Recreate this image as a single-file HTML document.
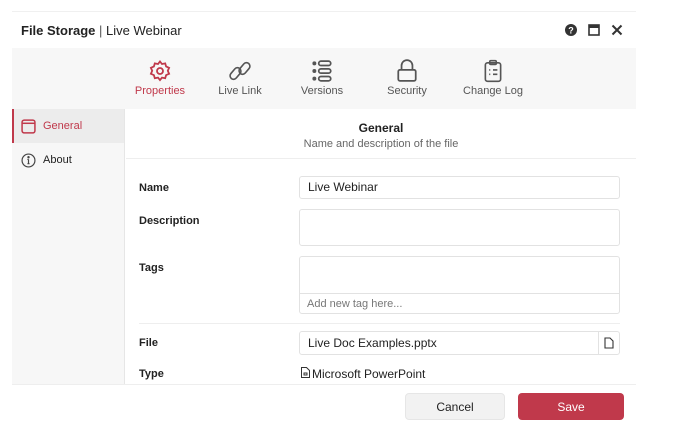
<!DOCTYPE html>
<html><head><meta charset="utf-8"><style>
*{box-sizing:border-box;margin:0;padding:0}
body{width:679px;height:442px;background:#fff;font-family:"Liberation Sans",sans-serif;color:#222;position:relative;overflow:hidden}
.dlg{position:absolute;left:12px;top:11px;width:624px;height:420px;background:#fff;border-top:1px solid #f0f0f0}
.hdr{position:absolute;left:0;top:0;width:624px;height:36px}
.title{position:absolute;left:9px;top:11px;font-size:13px}
.tabs{position:absolute;left:0;top:36px;width:624px;height:61px;background:#f7f7f7}
.tab{position:absolute;top:0;text-align:center;font-size:11px;color:#555}
.tab svg{display:block;margin:11px auto 2px}
.side{position:absolute;left:0;top:97px;width:113px;height:275px;background:#f7f7f7;border-right:1px solid #e6e6e6}
.si{height:34px;display:flex;align-items:center;font-size:11px;padding-left:9px;gap:7px}
.si.act{background:#ececec;border-left:2px solid #c0394b;color:#c0394b;padding-left:7px}
.content{position:absolute;left:114px;top:97px;width:510px;height:275px}
.lbl{position:absolute;left:13px;font-size:11px;font-weight:bold;color:#222}
.inp{position:absolute;left:173px;width:321px;border:1px solid #e2e2e2;border-radius:3px;background:#fff;font-size:12px;padding-left:8px}
.foot{position:absolute;left:0;top:372px;width:624px;height:48px;background:#fff;border-top:1px solid #eee}
.btn{position:absolute;top:8px;height:27px;border-radius:4px;font-size:12px;display:flex;align-items:center;justify-content:center}
</style></head><body>
<div class="dlg">
 <div class="hdr">
  <div class="title"><b>File Storage</b> <span style="color:#555">|</span> Live Webinar</div>
  <svg style="position:absolute;left:553px;top:12px" width="12" height="12" viewBox="0 0 12 12"><circle cx="6" cy="6" r="6" fill="#333"/><text x="6" y="9.5" font-size="9" font-weight="bold" text-anchor="middle" fill="#fff" font-family="Liberation Sans">?</text></svg>
  <svg style="position:absolute;left:576px;top:12px" width="12" height="12" viewBox="0 0 12 12"><rect x="1" y="1" width="10" height="10" fill="none" stroke="#333" stroke-width="1.6"/><rect x="1" y="1" width="10" height="3" fill="#333"/></svg>
  <svg style="position:absolute;left:599px;top:12px" width="12" height="12" viewBox="0 0 12 12"><path d="M1.5 1.5L10.5 10.5M10.5 1.5L1.5 10.5" stroke="#333" stroke-width="2"/></svg>
 </div>
 <div class="tabs">
  <div class="tab" style="left:118px;width:60px;color:#c0394b">
   <svg width="24" height="24" viewBox="0 0 24 24" fill="none" stroke="#c0394b" stroke-width="1.8"><circle cx="12" cy="12" r="3"/><path d="M12 2.5l2 2.5 3.2-.6.9 3.1 3 1.3-1.3 3 1.3 3-3 1.3-.9 3.1-3.2-.6-2 2.5-2-2.5-3.2.6-.9-3.1-3-1.3 1.3-3-1.3-3 3-1.3.9-3.1 3.2.6z"/></svg>Properties</div>
  <div class="tab" style="left:198px;width:60px">
   <svg width="26" height="24" viewBox="0 0 26 24" fill="none" stroke="#555" stroke-width="1.6"><rect x="2" y="11" width="13" height="7" rx="3.5" transform="rotate(-50 8.5 14.5)"/><rect x="11" y="6" width="13" height="7" rx="3.5" transform="rotate(-50 17.5 9.5)"/></svg>Live Link</div>
  <div class="tab" style="left:280px;width:60px">
   <svg width="24" height="24" viewBox="0 0 22 22" fill="none" stroke="#555" stroke-width="1.6"><circle cx="4" cy="4" r="1" fill="#555"/><circle cx="4" cy="11" r="1" fill="#555"/><circle cx="4" cy="18" r="1" fill="#555"/><rect x="8" y="2" width="11" height="4" rx="2"/><rect x="8" y="9" width="11" height="4" rx="2"/><rect x="8" y="16" width="11" height="4" rx="2"/></svg>Versions</div>
  <div class="tab" style="left:365px;width:60px">
   <svg width="22" height="24" viewBox="0 0 20 22" fill="none" stroke="#555" stroke-width="1.6"><path d="M5 10V6a5 5 0 0 1 10 0v4"/><rect x="2" y="10" width="16" height="10" rx="1.5"/></svg>Security</div>
  <div class="tab" style="left:450px;width:62px">
   <svg width="22" height="24" viewBox="0 0 20 22" fill="none" stroke="#555" stroke-width="1.5"><rect x="3" y="3.5" width="14" height="17" rx="2"/><rect x="7" y="1.5" width="6" height="3.5" rx="1"/><path d="M6.5 10h1M10 10h4M6.5 14h1M10 14h4"/></svg>Change Log</div>
 </div>
 <div class="side">
  <div class="si act"><svg width="15" height="15" viewBox="0 0 14 14" fill="none" stroke="#c0394b" stroke-width="1.4"><rect x="1" y="1" width="12" height="12" rx="2"/><path d="M1 4h12"/></svg>General</div>
  <div class="si"><svg width="15" height="15" viewBox="0 0 14 14" fill="none" stroke="#444" stroke-width="1.1"><circle cx="7" cy="7" r="6"/><path d="M7 6v4M6 10h2M6 6h1"/><circle cx="7" cy="4" r=".6" fill="#444"/></svg>About</div>
 </div>
 <div class="content">
  <div style="position:absolute;left:0;top:0;width:510px;height:50px;border-bottom:1px solid #eee;text-align:center">
   <div style="font-size:12px;font-weight:bold;margin-top:12px">General</div>
   <div style="font-size:11px;color:#666;margin-top:3px">Name and description of the file</div>
  </div>
  <div class="lbl" style="top:73px">Name</div>
  <div class="inp" style="top:67px;height:23px;line-height:21px">Live Webinar</div>
  <div class="lbl" style="top:106px">Description</div>
  <div class="inp" style="top:100px;height:37px"></div>
  <div class="lbl" style="top:153px">Tags</div>
  <div class="inp" style="top:147px;height:58px;padding:0">
   <div style="position:absolute;left:0;top:36px;width:100%;border-top:1px solid #e2e2e2;font-size:11px;color:#777;padding:4px 0 0 7px">Add new tag here...</div>
  </div>
  <div style="position:absolute;left:13px;top:214px;width:481px;border-top:1px solid #eee"></div>
  <div class="lbl" style="top:228px">File</div>
  <div class="inp" style="top:222px;height:24px;line-height:22px">Live Doc Examples.pptx
   <div style="position:absolute;right:0;top:0;width:21px;height:22px;border-left:1px solid #e2e2e2"><svg style="position:absolute;left:5px;top:5px" width="10" height="12" viewBox="0 0 10 12" fill="none" stroke="#333" stroke-width="1.1"><path d="M1 1h5l3 3v7H1z"/></svg></div>
  </div>
  <div class="lbl" style="top:259px">Type</div>
  <div style="position:absolute;left:175px;top:258px;font-size:12px"><svg style="margin-right:2px" width="9" height="11" viewBox="0 0 9 11" fill="none" stroke="#333" stroke-width="1"><path d="M.5.5h5l3 3v7H.5z"/><path d="M3 6h3v2H3z"/></svg>Microsoft PowerPoint</div>
 </div>
 <div class="foot">
  <div class="btn" style="left:393px;width:100px;background:#f2f2f2;border:1px solid #e6e6e6">Cancel</div>
  <div class="btn" style="left:506px;width:106px;background:#c0394b;color:#fff">Save</div>
 </div>
</div>
</body></html>
